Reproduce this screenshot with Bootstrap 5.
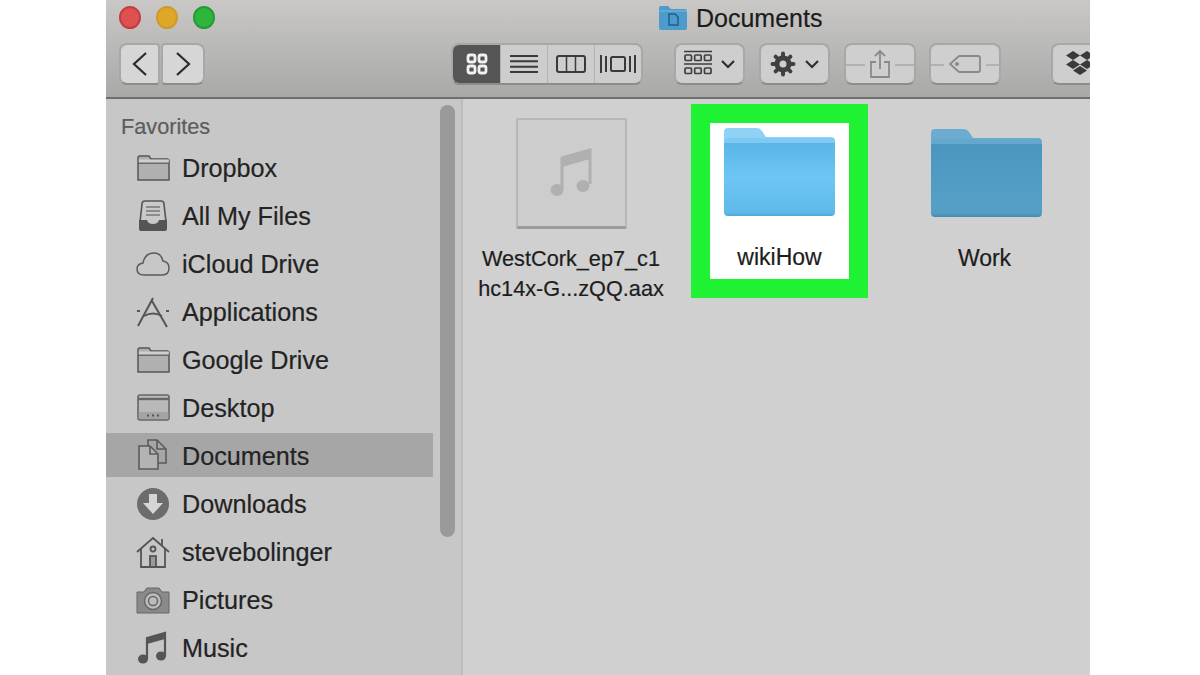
<!DOCTYPE html>
<html lang="en"><head><meta charset="utf-8"><title>Documents</title>
<link href="https://cdn.jsdelivr.net/npm/bootstrap@5.3.0/dist/css/bootstrap.min.css" rel="stylesheet">
<style>
html,body{margin:0;height:675px;overflow:hidden;background:#fff}
body{font-family:"Liberation Sans",Arial,sans-serif;color:#222}
.finder{width:984px;height:675px;margin-left:106px;overflow:hidden;background:#cbcbcb}
.titlebar{height:99px;background:linear-gradient(#c9c8c6,#a9a9a8);border-bottom:2px solid #6e6e6e;flex:none}
.lights{left:13px;top:6px;gap:15px}
.dot{width:22px;height:23px;border-radius:50%;display:block}
.dot-r{background:#df5051;border:2px solid #c53b40}
.dot-y{background:#dfa727;border:2px solid #cf9a2c}
.dot-g{background:#2fb43e;border:2px solid #239c35}
.wtitle{top:4px;left:552px;gap:8px;font-size:25px;line-height:28px;color:#1c1c1c;-webkit-text-stroke:.2px #1c1c1c}
.tool{height:42px;top:43px;border-radius:8px;background:#cecece;border:2px solid #a8a8a8;border-bottom-color:#8d8d8d;display:flex;align-items:center;justify-content:center;gap:9px;padding:0}
.t-back{left:13px;width:41px;border-radius:8px 4px 4px 8px;background:#d6d6d6}
.t-fwd{left:55px;width:44px;border-radius:4px 8px 8px 4px;background:#d6d6d6}
.t-view{left:345px;width:192px;overflow:hidden;justify-content:flex-start;gap:0;background:#cdcdcd}
.vseg{width:47px;height:100%;display:flex;align-items:center;justify-content:center;border-right:1px solid #b3b3b3}
.vseg:last-child{border-right:0}
.vseg-on{background:#555;width:49px}
.t-arr{left:568px;width:71px}
.t-gear{left:653px;width:71px}
.t-share{left:738px;width:72px;background:#cfcfcf}
.t-tag{left:823px;width:72px;background:#cfcfcf}
.t-drop{left:945px;width:60px;justify-content:flex-start;padding-left:12px}
.line-dis{position:absolute;left:0;right:0;top:50%;height:2px;background:#b2b2b2}
.dis-ic{position:relative;background:#cfcfcf;padding:0 5px;box-sizing:content-box}
.bodyrow{flex:1;min-height:0}
.sidebar{width:357px;background:#c7c7c7;border-right:2px solid #bcbcbc;flex:none}
.fav{font-size:21.7px;line-height:24px;color:#5c5c5c;margin:16px 0 0 15px;height:29px;-webkit-text-stroke:.2px #5c5c5c}
.sidelist{margin:0;padding:0;list-style:none;width:327px}
.side-i{height:48px;display:flex;align-items:center;gap:12px;padding-left:30px;font-size:25.2px;color:#232323;line-height:28px;-webkit-text-stroke:.2px #232323}
.side-i svg{flex:none}
.side-on{background:#a6a6a6;height:44px;margin:1px 0 3px}
.side-on span{padding-top:2px}
.sb-track{position:absolute;left:334px;top:6px;width:15px;height:432px;border-radius:8px;background:#9a9a9a}
.content{background:#d0d0d0;padding:5px 0 0 8px;gap:12px}
.fitem{text-align:center;font-size:23px;line-height:30px;color:#1d1d1d;-webkit-text-stroke:.2px #1d1d1d}
.fitem-a{width:200px;padding-top:14px;font-size:21.7px;white-space:nowrap}
.fitem-b{width:177px;height:194px;border:19px solid #1ff133;background:#fff;padding-top:5px;margin-left:8px}
.fitem-c{width:200px;padding-top:25px;margin-left:6px}
.doc-thumb{width:111px;height:111px;margin:0 auto;background:#cdcdcd;border:2px solid #b7b7b7;border-bottom:3px solid #9c9c9c;border-radius:2px;display:flex;align-items:center;justify-content:center}
.cap{margin-top:15px}
.cap2{margin-top:26px}
.cap3{margin-top:26px;padding-right:3px}
.folder{display:block;margin:0 auto}
</style></head><body>
<div class="finder d-flex flex-column">
<div class="titlebar position-relative">
  <div class="lights position-absolute d-flex"><span class="dot dot-r"></span><span class="dot dot-y"></span><span class="dot dot-g"></span></div>
  <div class="wtitle position-absolute d-flex align-items-center">
    <svg width="30" height="26" viewBox="0 0 30 26"><path d="M1 3q0-2 2-2h7l3 3h14q2 0 2 2v17q0 2-2 2H3q-2 0-2-2z" fill="#4d9bca"/><path d="M1 6h28" stroke="#7fb7d9" stroke-width="1"/><path d="M11 9h6l3 3v8h-9z" fill="none" stroke="#1f5f8c" stroke-width="1.5"/></svg>
    <span>Documents</span></div>
  <div class="tool t-back position-absolute"><svg width="16" height="26" viewBox="0 0 16 26"><path d="M14 2 2 13l12 11" fill="none" stroke="#2a2a2a" stroke-width="2.200"/></svg></div>
  <div class="tool t-fwd position-absolute"><svg width="16" height="26" viewBox="0 0 16 26"><path d="M2 2l12 11L2 24" fill="none" stroke="#2a2a2a" stroke-width="2.200"/></svg></div>
  <div class="tool t-view position-absolute">
    <div class="vseg vseg-on"><svg width="22" height="22" viewBox="0 0 22 22" fill="none" stroke="#f2f2f2" stroke-width="2.800"><rect x="2" y="2" width="7" height="7" rx="2"/><rect x="13" y="2" width="7" height="7" rx="2"/><rect x="2" y="13" width="7" height="7" rx="2"/><rect x="13" y="13" width="7" height="7" rx="2"/></svg></div>
    <div class="vseg"><svg width="28" height="20" viewBox="0 0 28 20" stroke="#3a3a3a" stroke-width="2"><path d="M0 2h28M0 7.300h28M0 12.700h28M0 18h28"/></svg></div>
    <div class="vseg"><svg width="30" height="20" viewBox="0 0 30 20" fill="none" stroke="#3a3a3a" stroke-width="2"><rect x="1" y="2" width="28" height="16" rx="2"/><path d="M10.500 2v16M19.500 2v16" stroke-width="1.500"/></svg></div>
    <div class="vseg"><svg width="36" height="20" viewBox="0 0 36 20" fill="none" stroke="#3a3a3a" stroke-width="2"><rect x="11" y="3" width="14" height="14" rx="1.500"/><path d="M1 1v18M6 2v16M30 2v16M35 1v18"/></svg></div>
  </div>
  <div class="tool t-arr position-absolute"><svg width="28" height="28" viewBox="0 0 28 28" fill="none" stroke="#3f3f3f" stroke-width="1.700"><path d="M0 1.500h28M0 14h28"/><rect x="1" y="5" width="6.500" height="5.500" rx="1"/><rect x="10.700" y="5" width="6.500" height="5.500" rx="1"/><rect x="20.500" y="5" width="6.500" height="5.500" rx="1"/><rect x="1" y="18" width="6.500" height="5.500" rx="1"/><rect x="10.700" y="18" width="6.500" height="5.500" rx="1"/><rect x="20.500" y="18" width="6.500" height="5.500" rx="1"/></svg><svg width="14" height="9" viewBox="0 0 14 9"><path d="M1 1l6 6 6-6" fill="none" stroke="#2e2e2e" stroke-width="2.200"/></svg></div>
  <div class="tool t-gear position-absolute"><svg width="26" height="26" viewBox="0 0 26 26"><circle cx="13" cy="13" r="6" fill="none" stroke="#404040" stroke-width="5"/><g stroke="#404040" stroke-width="4" stroke-linecap="round"><path d="M13 2.500v3M13 20.500v3M2.500 13h3M20.500 13h3M5.600 5.600l2.100 2.100M18.300 18.300l2.100 2.100M5.600 20.400l2.100-2.100M18.300 7.700l2.100-2.100"/></g></svg><svg width="14" height="9" viewBox="0 0 14 9"><path d="M1 1l6 6 6-6" fill="none" stroke="#2e2e2e" stroke-width="2.200"/></svg></div>
  <div class="tool t-share position-absolute"><span class="line-dis"></span><svg class="dis-ic" width="20" height="30" viewBox="0 0 20 30" fill="none" stroke="#8a8a8a" stroke-width="1.800"><path d="M6 13H1v15h18V13h-5"/><path d="M10 20V2M5 7l5-5 5 5"/></svg></div>
  <div class="tool t-tag position-absolute"><span class="line-dis"></span><svg class="dis-ic" width="32" height="20" viewBox="0 0 32 20" fill="none" stroke="#8a8a8a" stroke-width="1.800"><path d="M10 2h19q2 0 2 2v12q0 2-2 2H10L1 10z"/><circle cx="8" cy="10" r="1.200"/></svg></div>
  <div class="tool t-drop position-absolute"><svg width="30" height="28" viewBox="0 0 30 28" fill="#3a3a3a"><path d="M8 1l7 4.500L8 10 1 5.500zM22 1l7 4.500L22 10l-7-4.500zM8 10l7 4.500L8 19l-7-4.500zM22 10l7 4.500L22 19l-7-4.500zM15 16l7 4.500L15 25l-7-4.500z"/></svg></div>
</div>
<div class="bodyrow d-flex">
  <aside class="sidebar position-relative">
    <div class="fav">Favorites</div>
    <ul class="sidelist">
      <li class="side-i"><svg width="34" height="28" viewBox="0 0 34 28"><path d="M2 4q0-2 2-2h9l2 3h16q2 0 2 2v19H2z" fill="#b0b0b0" stroke="#555" stroke-width="1.500"/><path d="M2 9h31" stroke="#555" stroke-width="1.500"/><path d="M2.800 5.500h30v3h-30z" fill="#cfcfcf"/></svg><span>Dropbox</span></li>
      <li class="side-i"><svg width="34" height="32" viewBox="0 0 34 32"><path d="M4 22 6 4q0-3 3-3h16q3 0 3 3l2 18" fill="#c9c9c9" stroke="#555" stroke-width="1.600"/><path d="M10 7h14M10 11h14M10 15h14" stroke="#777" stroke-width="1.500"/><path d="M3 20h8q1 4 6 4t6-4h8v9q0 2-2 2H5q-2 0-2-2z" fill="#555"/></svg><span>All My Files</span></li>
      <li class="side-i"><svg width="34" height="26" viewBox="0 0 34 26"><path d="M8 24q-7 0-7-6 0-5 6-6 2-10 11-10 7 0 9 8 6 1 6 7 0 7-7 7z" fill="none" stroke="#5b5b5b" stroke-width="1.500"/></svg><span>iCloud Drive</span></li>
      <li class="side-i"><svg width="34" height="32" viewBox="0 0 34 32" fill="none" stroke="#555" stroke-width="2"><path d="M17 2 2 30M16 5l15 26"/><path d="M8 20q9-5 18 0" stroke-width="2"/><path d="M1 15h3M30 15h3"/></svg><span>Applications</span></li>
      <li class="side-i"><svg width="34" height="28" viewBox="0 0 34 28"><path d="M2 4q0-2 2-2h9l2 3h16q2 0 2 2v19H2z" fill="#b0b0b0" stroke="#555" stroke-width="1.500"/><path d="M2 9h31" stroke="#555" stroke-width="1.500"/><path d="M2.800 5.500h30v3h-30z" fill="#cfcfcf"/></svg><span>Google Drive</span></li>
      <li class="side-i"><svg width="34" height="28" viewBox="0 0 34 28"><rect x="2" y="1" width="31" height="25" rx="2" fill="#b9b9b9" stroke="#666" stroke-width="1.600"/><path d="M2 5h31" stroke="#666" stroke-width="2.400"/><path d="M2 18h31v7H2z" fill="#8f8f8f" opacity=".5"/><path d="M11 21.500h2M16 21.500h2M21 21.500h2" stroke="#555" stroke-width="2"/></svg><span>Desktop</span></li>
      <li class="side-i side-on"><svg width="34" height="32" viewBox="0 0 34 32" fill="none" stroke="#5b5b5b" stroke-width="1.600"><path d="M12 8V1h9l9 9v14h-8"/><path d="M21 1v9h9"/><path d="M3 7h11l8 8v15H3z" fill="#b3b3b3"/><path d="M14 7v8h8"/></svg><span>Documents</span></li>
      <li class="side-i"><svg width="34" height="34" viewBox="0 0 34 34"><circle cx="17" cy="17" r="16" fill="#6c6c6c"/><path d="M13 7h8v9h6L17 27 7 16h6z" fill="#d5d5d5"/></svg><span>Downloads</span></li>
      <li class="side-i"><svg width="34" height="32" viewBox="0 0 34 32" fill="none" stroke="#555" stroke-width="1.800"><path d="M1 16 17 2l16 14"/><path d="M5 13v18h24V13M26 9V3"/><rect x="14" y="20" width="6" height="11" fill="#999"/><circle cx="17" cy="13" r="2.500"/></svg><span>stevebolinger</span></li>
      <li class="side-i"><svg width="34" height="28" viewBox="0 0 34 28"><path d="M1 6h7l2-3 1-1h12l3 4h7v21H1z" fill="#8a8a8a" stroke="#666"/><circle cx="17" cy="15" r="8.500" fill="#bcbcbc" stroke="#666" stroke-width="1.500"/><circle cx="17" cy="15" r="4.500" fill="none" stroke="#666" stroke-width="1.500"/></svg><span>Pictures</span></li>
      <li class="side-i"><svg width="34" height="34" viewBox="0 0 34 34"><path d="M11 28V7l18-5v23" fill="none" stroke="#555" stroke-width="2.200"/><path d="M11 7l18-5v6l-18 5z" fill="#555"/><ellipse cx="7" cy="28" rx="5" ry="4.500" fill="#555"/><ellipse cx="25" cy="25" rx="5" ry="4.500" fill="#555"/></svg><span>Music</span></li>
    </ul>
    <div class="sb-track"></div>
  </aside>
  <main class="content flex-grow-1 d-flex align-items-start">
    <div class="fitem fitem-a">
      <div class="doc-thumb"><svg width="42" height="50" viewBox="0 0 42 50"><path d="M12 42V10l28-8v34" fill="none" stroke="#b0b0b0" stroke-width="3"/><path d="M12 10 40 2v9l-28 8z" fill="#b0b0b0"/><ellipse cx="7" cy="42" rx="6.500" ry="6" fill="#b0b0b0"/><ellipse cx="33" cy="38" rx="6.500" ry="6" fill="#b0b0b0"/></svg></div>
      <div class="cap">WestCork_ep7_c1<br>hc14x-G...zQQ.aax</div>
    </div>
    <div class="fitem fitem-b">
      <svg class="folder" width="111" height="88" viewBox="0 0 111 88"><defs><linearGradient id="fb" x1="0" y1="0" x2="0" y2="1"><stop offset="0" stop-color="#7fcaf2"/><stop offset=".06" stop-color="#7fcaf2"/><stop offset=".07" stop-color="#5ab6e6"/><stop offset=".5" stop-color="#6cc5f5"/><stop offset=".95" stop-color="#5fbaea"/><stop offset="1" stop-color="#4fa8d8"/></linearGradient></defs><path d="M0 4q0-4 4-4h29q3 0 5 3l4 6h65q4 0 4 4v20H0z" fill="#8fd2f5"/><path d="M0 15q0-5 5-5h101q5 0 5 5v69q0 4-4 4H4q-4 0-4-4z" fill="url(#fb)"/></svg>
      <div class="cap2">wikiHow</div>
    </div>
    <div class="fitem fitem-c">
      <svg class="folder" width="111" height="88" viewBox="0 0 111 88"><defs><linearGradient id="fc" x1="0" y1="0" x2="0" y2="1"><stop offset="0" stop-color="#65a8cd"/><stop offset=".06" stop-color="#65a8cd"/><stop offset=".07" stop-color="#4a96be"/><stop offset=".8" stop-color="#559fc7"/><stop offset=".95" stop-color="#559fc7"/><stop offset="1" stop-color="#4489ae"/></linearGradient></defs><path d="M0 4q0-4 4-4h29q3 0 5 3l4 6h65q4 0 4 4v20H0z" fill="#6cacd0"/><path d="M0 15q0-5 5-5h101q5 0 5 5v69q0 4-4 4H4q-4 0-4-4z" fill="url(#fc)"/></svg>
      <div class="cap3">Work</div>
    </div>
  </main>
</div>
</div>
<script src="https://cdn.jsdelivr.net/npm/bootstrap@5.3.0/dist/js/bootstrap.bundle.min.js"></script>
</body></html>
